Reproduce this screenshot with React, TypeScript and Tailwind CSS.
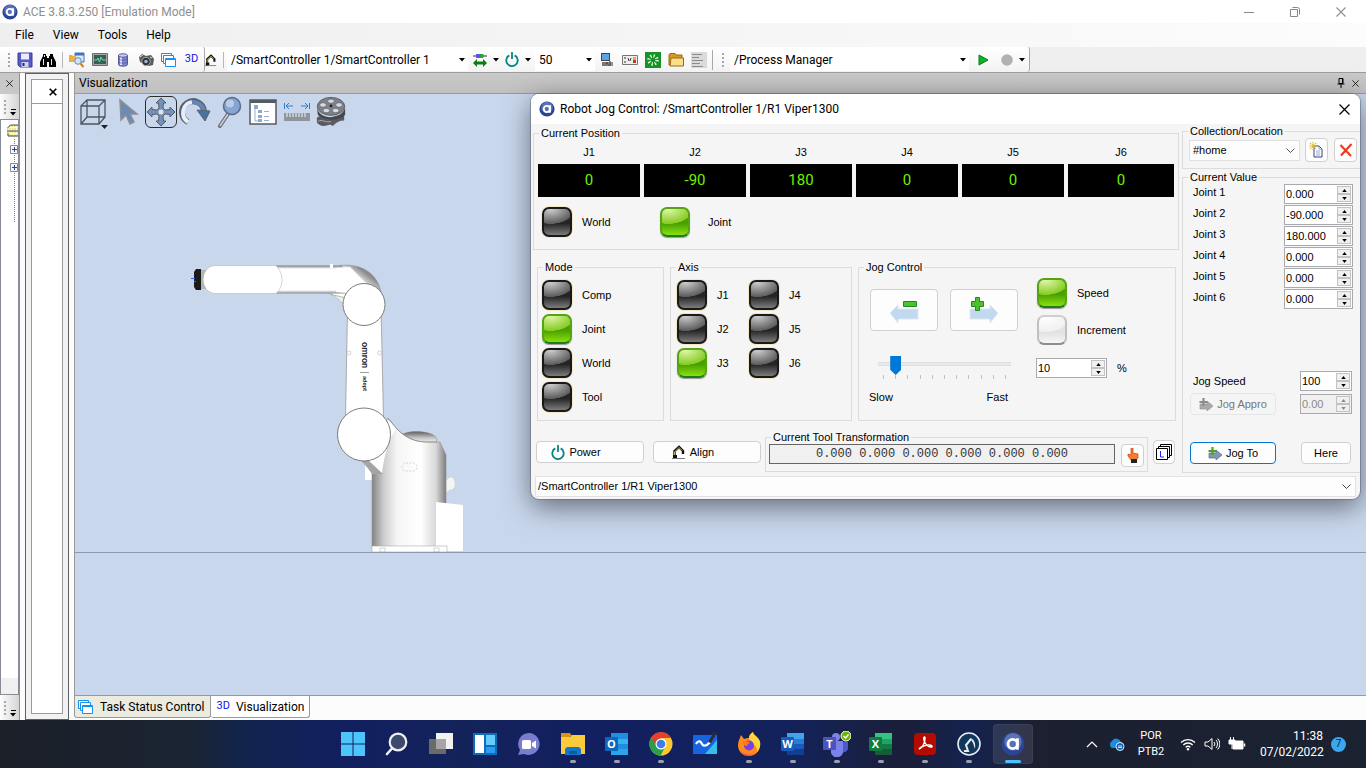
import React from 'react';
import clsx from 'clsx';

const positions = [
  { name: 'J1', value: '0' },
  { name: 'J2', value: '-90' },
  { name: 'J3', value: '180' },
  { name: 'J4', value: '0' },
  { name: 'J5', value: '0' },
  { name: 'J6', value: '0' },
];

const jointValues = ['0.000', '-90.000', '180.000', '0.000', '0.000', '0.000'];

/* ---------- icons ---------- */

function AceLogo({ className }: { className: string }) {
  return (
    <svg viewBox="0 0 16 16" className={className}>
      <circle cx="8" cy="8" r="7.600" fill="#2b4594" />
      <circle cx="8" cy="6.500" r="5.800" fill="#6f88c8" opacity="0.700" />
      <circle cx="7.800" cy="8" r="3.100" fill="none" stroke="#fff" strokeWidth="1.900" />
      <path d="M11 4.200v7.600" stroke="#fff" strokeWidth="1.800" />
    </svg>
  );
}

function Caret() {
  return (
    <svg viewBox="0 0 6 4" className="h-[4px] w-[6px] shrink-0">
      <path d="M0 0h6L3 3.400z" fill="#000" />
    </svg>
  );
}

function SaveIcon() {
  return (
    <svg viewBox="0 0 16 16" className="size-4">
      <path d="M1 1h14v14H3l-2-2z" fill="#5559cc" stroke="#3a3d96" />
      <path d="M4 1.500h8v6H4z" fill="#e9edff" />
      <path d="M4.500 10h7v5h-7z" fill="#cfd3e8" />
      <path d="M5.500 11h2v3h-2z" fill="#23267a" />
    </svg>
  );
}

function BinocularsIcon() {
  return (
    <svg viewBox="0 0 16 16" className="size-4">
      <path d="M3 2h3v2h1v2h2V4h1V2h3v2l1 2 2 4v5H9v-5H7v5H0v-5l2-4 1-2z" fill="#000" />
      <path d="M3.500 7v6M11.500 7v6M4.500 3v2" stroke="#fff" strokeWidth="0.900" />
    </svg>
  );
}

function FolderSearchIcon() {
  return (
    <svg viewBox="0 0 16 16" className="size-4">
      <path d="M6 1h9v9H6z" fill="#dce9fb" stroke="#3e73c4" />
      <path d="M6 1h9v2.500H6z" fill="#3e73c4" />
      <path d="M0 3h3l1 1h3v6H0z" fill="#e8b23c" />
      <circle cx="9" cy="9" r="3.300" fill="#cfe4fa" stroke="#6b87ab" />
      <path d="M11.500 11.500l3 3.500" stroke="#c98325" strokeWidth="2" />
    </svg>
  );
}

function MonitorIcon() {
  return (
    <svg viewBox="0 0 16 14" className="h-[14px] w-4">
      <path d="M.5.5h15v12H.5z" fill="#a8a8a8" stroke="#6b6b6b" />
      <path d="M2 2h12v9H2z" fill="#3c5a56" />
      <path d="M2 7h3l1-2 1.500 4L9 4l1.500 3H14" fill="none" stroke="#59f0b0" strokeWidth="0.900" />
    </svg>
  );
}

function DatabaseIcon() {
  return (
    <svg viewBox="0 0 12 14" className="h-[14px] w-3">
      <path d="M1.500 2.500v9c0 2.300 9 2.300 9 0v-9z" fill="#7f88cf" stroke="#3c3f86" strokeWidth="0.800" />
      <path d="M3 4v8h2V4z" fill="#e2e6ff" />
      <ellipse cx="6" cy="2.500" rx="4.500" ry="1.800" fill="#c6cbf2" stroke="#3c3f86" strokeWidth="0.800" />
      <path d="M1.500 6c1 1.500 8 1.500 9 0M1.500 9c1 1.500 8 1.500 9 0" fill="none" stroke="#3c3f86" strokeWidth="0.600" />
    </svg>
  );
}

function CameraIcon() {
  return (
    <svg viewBox="0 0 16 14" className="h-[14px] w-4">
      <path d="M1 4l3-3 4 2 5-1 3 4-1 6-4 1-9-4z" fill="#5b5b5b" />
      <circle cx="8" cy="8.500" r="4.200" fill="#333" stroke="#aaa" />
      <circle cx="8" cy="8.500" r="1.800" fill="#9db6dc" />
      <path d="M2 4l3-2M12 4l2 1" stroke="#ddd" />
    </svg>
  );
}

function WindowsIcon() {
  return (
    <svg viewBox="0 0 15 14" className="h-[14px] w-[15px]">
      <g fill="#fff" stroke="#1492ef" strokeWidth="1">
        <path d="M.5.5h10v8H.5z" />
        <path d="M2.500 2.500h10v8H2.500z" />
        <path d="M4.500 5.500h10v8H4.500z" />
      </g>
      <path d="M4.500 6.500h10" stroke="#1492ef" />
    </svg>
  );
}

function ArmIcon({ className }: { className: string }) {
  return (
    <svg viewBox="0 0 14 14" className={className}>
      <path d="M0 13.500h13" stroke="#777" />
      <path d="M2.500 13V6l4.500-4 4 4v3" fill="none" stroke="#111" strokeWidth="2.400" />
      <path d="M2.500 11V7l4.500-4.500 3 3" fill="none" stroke="#d4c46a" strokeWidth="0.900" />
      <path d="M1 10h4v3H1z" fill="#111" />
    </svg>
  );
}

function PowerIcon() {
  return (
    <svg viewBox="0 0 14 15" className="h-[15px] w-[14px]">
      <path d="M4.300 3.400a5.700 5.700 0 1 0 5.400 0M7 0v7" fill="none" stroke="#058484" strokeWidth="1.800" />
    </svg>
  );
}

function ConnectIcon() {
  return (
    <svg viewBox="0 0 14 14" className="size-[14px]">
      <path d="M0 3h14" stroke="#333" />
      <path d="M3 1h4v4H3z" fill="#5a55e8" />
      <path d="M7 1h3l1 2-1 2H7z" fill="#2aa33a" />
      <path d="M0 10l4-4v2.500h6V6l4 4-4 4v-2.500H4V14z" fill="#087d10" />
    </svg>
  );
}

function RobotArm() {
  return (
    <svg viewBox="190 256 285 296" className="ml-[115px] h-[296px] w-[285px] shrink-0">
      <defs>
        <linearGradient id="body" x1="0" x2="1" y1="0" y2="0">
          <stop offset="0.120" stopColor="#858585" />
          <stop offset="0.260" stopColor="#cdcdcd" />
          <stop offset="0.420" stopColor="#f6f6f6" />
          <stop offset="0.700" stopColor="#ffffff" />
          <stop offset="0.880" stopColor="#d8d8d8" />
          <stop offset="1" stopColor="#7d7d7d" />
        </linearGradient>
        <linearGradient id="tube" x1="0" x2="0" y1="0" y2="1">
          <stop offset="0" stopColor="#7a7a7a" />
          <stop offset="0.120" stopColor="#ffffff" />
          <stop offset="0.880" stopColor="#ffffff" />
          <stop offset="1" stopColor="#8a8a8a" />
        </linearGradient>
        <linearGradient id="elbow" x1="0" x2="1" y1="1" y2="0">
          <stop offset="0.480" stopColor="#ffffff" />
          <stop offset="0.600" stopColor="#e2e2e2" />
          <stop offset="0.750" stopColor="#8a8a8a" />
        </linearGradient>
        <linearGradient id="dome" x1="0" x2="0" y1="0" y2="1">
          <stop offset="0" stopColor="#5f5f5f" />
          <stop offset="0.500" stopColor="#c4c4c4" />
          <stop offset="1" stopColor="#ffffff" />
        </linearGradient>
      </defs>

      {/* base and column */}
      <path d="M365 465h8v15h-8z" fill="#fff" />
      <path d="M446 480l4-3h3l2 4v6l-3 3h-2l-4 3z" fill="#f4f4f4" stroke="#c4c4c4" strokeWidth="0.500" />
      <path d="M399 437c3-7 34-8 38 2l-1 5h-34z" fill="url(#dome)" stroke="#888" strokeWidth="0.500" />
      <path
        d="M388 418l9 11c9 9 18 13 30 13h13l6 13v92h-74v-74l-10-12z"
        fill="url(#body)"
        stroke="#8b8b8b"
        strokeWidth="0.500"
      />
      <path d="M363 461l9-5 13-18 3-18 8 8c-8 14-12 28-14 46h-10z" fill="#fff" />
      <path d="M363 461l5-1 15 14h-11z" fill="#a4a4a4" />
      <path d="M388 418l9 11c9 9 18 13 30 13h10" fill="none" stroke="#777" strokeWidth="0.600" />
      <path d="M436 502l27 3v46h-27z" fill="#fff" />
      <path d="M372 546h75v6h-75z" fill="#fff" stroke="#999" strokeWidth="0.500" />
      <path d="M380 548h5v4h-5zM434 548h5v4h-5z" fill="none" stroke="#aaa" strokeWidth="0.500" />
      <rect x="402" y="463" width="15" height="8" rx="4" fill="none" stroke="#aaa" strokeWidth="0.500" strokeDasharray="2 1.500" />

      {/* upper arm */}
      <path d="M347.500 310l33.500-2 2.500 110h-38z" fill="#fff" stroke="#999" strokeWidth="0.800" />
      <circle cx="349" cy="353" r="2" fill="#fff" stroke="#aaa" strokeWidth="0.500" />
      <circle cx="379.500" cy="353" r="2" fill="#fff" stroke="#aaa" strokeWidth="0.500" />
      <text transform="translate(362 342) rotate(90)" className="font-['Lato',sans-serif] text-[9px] font-bold" fill="#222">
        omron
      </text>
      <path d="M360 372.500h9" stroke="#777" strokeWidth="0.700" />
      <text transform="translate(363 376) rotate(90)" className="font-['Lato',sans-serif] text-[6px] font-bold" fill="#222">
        adept
      </text>
      <circle cx="364" cy="434.500" r="26.500" fill="#fff" stroke="#6d6d6d" strokeWidth="0.900" />

      {/* forearm */}
      <path d="M324 292c8 2 14 6 20 13l6-15z" fill="#f0f0f0" stroke="#999" strokeWidth="0.500" />
      <path d="M340 265.500c20-2 36 6 41 26l-10 12-40-9z" fill="url(#elbow)" stroke="#888" strokeWidth="0.600" />
      <path d="M276 265.500h66c6 6 8 20 4 28h-70z" fill="url(#tube)" />
      <path d="M336 268l14-1 18 18-10 9-22-2z" fill="#fff" />
      <path d="M353 268l22 17" stroke="#aaa" strokeWidth="0.600" strokeDasharray="2 1.500" />
      <rect x="330" y="264" width="3" height="4" fill="#fff" />
      <circle cx="364" cy="304.500" r="21" fill="#fff" stroke="#6d6d6d" strokeWidth="0.900" />
      <path d="M200 270h8v19h-8z" fill="#b5b5b5" />
      <path d="M216 265.500h60c8 8 8 21 0 28h-60c-17 0-17-28 0-28z" fill="#fff" stroke="#aaa" strokeWidth="0.500" />
      <path d="M196 269h5v21h-5l-2-3v-15z" fill="#1b1b1b" />
      <path d="M191 278.500h4" stroke="#3366ee" />
      <path d="M194 281.500h2" stroke="#d33" />
    </svg>
  );
}

/* ---------- shared controls ---------- */

type LedProps = { label: string; name: string; on?: boolean; light?: boolean; wide?: boolean };

function Led({ label, name, on, light, wide }: LedProps) {
  return (
    <label className={clsx('flex h-8 items-center', wide ? 'gap-[17px]' : 'gap-[9px]')}>
      <input
        type="radio"
        name={name}
        defaultChecked={on}
        className={clsx(
          'mx-px size-[30px] shrink-0 appearance-none rounded-[7px] border-2',
          on &&
            'border-[#55a512] border-b-[#1f7d16] shadow-[0_1px_1px_#9a9a9a] bg-[radial-gradient(120%_75%_at_25%_0,#e2f7ae,#86cc22_75%,transparent_77%),linear-gradient(#4fa007,#48a000_55%,#8be010)]',
          light &&
            'border-[#c0c0c0] border-t-[#cfcfcf] border-b-[#8c8c8c] bg-[radial-gradient(120%_75%_at_25%_0,#ffffff,#f0f0f0_75%,transparent_77%),linear-gradient(#e4e4e4,#e2e2e2_60%,#f6f6f6)]',
          !on &&
            !light &&
            'border-[#191919] shadow-[0_0_0_1px_#f3e8c4] bg-[radial-gradient(120%_75%_at_25%_0,#d0d0d0,#5c5c5c_75%,transparent_77%),linear-gradient(#2c2c2c,#242424_55%,#7c7c7c)]',
        )}
      />
      {label}
    </label>
  );
}

type SpinProps = { id?: string; label: string; value: string; className: string; disabled?: boolean };

function Spin({ id, label, value, className, disabled }: SpinProps) {
  return (
    <div
      className={clsx(
        'flex h-5 border border-[#a9a9ae] p-px',
        disabled ? 'bg-[#f0f0f0] text-[#8a8a8a]' : 'bg-white text-black',
        className,
      )}
    >
      <input
        id={id}
        aria-label={label}
        defaultValue={value}
        disabled={disabled}
        className="min-w-0 flex-1 bg-transparent text-[11px] leading-4 outline-none"
      />
      <div className="flex w-[14px] flex-col">
        <button aria-label={label + ' up'} disabled={disabled} className="flex flex-1 items-center justify-center border border-[#c2c2c2] bg-[#f0f0f0]">
          <svg viewBox="0 0 6 4" className="h-[3px] w-[5px]">
            <path d="M0 4h6L3 0z" fill="currentColor" />
          </svg>
        </button>
        <button aria-label={label + ' down'} disabled={disabled} className="flex flex-1 items-center justify-center border border-[#c2c2c2] bg-[#f0f0f0]">
          <svg viewBox="0 0 6 4" className="h-[3px] w-[5px]">
            <path d="M0 0h6L3 4z" fill="currentColor" />
          </svg>
        </button>
      </div>
    </div>
  );
}

function Group({ title, className, children }: { title: string; className: string; children: React.ReactNode }) {
  return (
    <fieldset className={clsx('min-w-0 border border-[#dcdcdc]', className)}>
      <legend className="ml-[5px] px-[2px] leading-[14px]">{title}</legend>
      {children}
    </fieldset>
  );
}

const pushButton = 'flex items-center justify-center rounded-[4px] border border-[#d0d0d0] bg-[#fdfdfd]';

/* ---------- main window ---------- */

function ToolButton({ label, children }: { label: string; children: React.ReactNode }) {
  return (
    <button aria-label={label} className="flex w-[23px] shrink-0 items-center justify-center">
      {children}
    </button>
  );
}

function Grip() {
  return <div className="h-[14px] w-[2px] shrink-0 bg-[repeating-linear-gradient(#a8a8a8_0_2px,transparent_2px_4px)]" />;
}

function ToolSelect({ label, value, className }: { label: string; value: string; className: string }) {
  return (
    <div className={clsx('flex h-[22px] shrink-0 items-center bg-white pr-[3px]', className)}>
      <select aria-label={label} className="h-full min-w-0 flex-1 appearance-none bg-transparent pl-1 outline-none">
        <option>{value}</option>
      </select>
      <Caret />
    </div>
  );
}

function ToolBar() {
  return (
    <div className="flex h-[25px] shrink-0 bg-[#efefef]">
      <div className="flex w-[205px] items-center rounded-r-[3px] border-r border-[#a8a8a8] bg-linear-to-b from-white to-[#f3f3f3] pl-2">
        <Grip />
        <div className="ml-[3px] flex items-center">
          <ToolButton label="Save"><SaveIcon /></ToolButton>
          <ToolButton label="Find"><BinocularsIcon /></ToolButton>
        </div>
        <div className="mr-[2px] ml-[3px] h-4 w-px shrink-0 bg-[#b8b8b8]" />
        <ToolButton label="Browse"><FolderSearchIcon /></ToolButton>
        <ToolButton label="Monitor"><MonitorIcon /></ToolButton>
        <ToolButton label="Data"><DatabaseIcon /></ToolButton>
        <ToolButton label="Camera"><CameraIcon /></ToolButton>
        <ToolButton label="Task status"><WindowsIcon /></ToolButton>
        <button className="w-[23px] text-[11px] text-[#1111ee]">3D</button>
      </div>
      <div className="flex items-center bg-linear-to-b from-white to-[#f3f3f3]">
        <button aria-label="Robot" className="w-3"><ArmIcon className="h-[14px] w-3" /></button>
        <div className="mr-[3px] ml-[6px] h-4 w-px bg-[#b8b8b8]" />
        <ToolSelect label="Controller" value="/SmartController 1/SmartController 1" className="w-[241px]" />
        <ToolButton label="Connect"><ConnectIcon /></ToolButton>
        <div className="mr-px ml-[2px]"><Caret /></div>
        <ToolButton label="Power"><PowerIcon /></ToolButton>
        <div className="mr-1 ml-[2px]"><Caret /></div>
        <ToolSelect label="Monitor speed" value="50" className="w-[60px]" />
        <ToolButton label="Computer">
          <svg viewBox="0 0 14 14" className="size-[14px]">
            <path d="M1 0h9v8H1z" fill="#444" />
            <path d="M2 1h7v6H2z" fill="#5aa3e6" />
            <path d="M2 9h6l1 4H2z" fill="#777" />
            <path d="M6 10h7M8 12h5M10 8v5" stroke="#333" />
          </svg>
        </ToolButton>
        <ToolButton label="Digital I/O">
          <svg viewBox="0 0 16 10" className="h-[10px] w-4">
            <path d="M.5.5h15v9H.5z" fill="#eee" stroke="#777" />
            <path d="M3 2v2M3 6v2M6 3l1 3M9 3l-1 3" stroke="#333" />
            <path d="M11 2h3v3h-3z" fill="#e3b21e" />
            <path d="M11 5h3v3h-3z" fill="#dd2b2b" />
          </svg>
        </ToolButton>
        <ToolButton label="Vision">
          <svg viewBox="0 0 16 16" className="size-4">
            <path d="M0 0h16v16H0z" fill="#159326" />
            <circle cx="8" cy="8" r="4" fill="none" stroke="#e9fbe9" strokeWidth="3.500" strokeDasharray="1.200 1.950" />
          </svg>
        </ToolButton>
        <ToolButton label="Open">
          <svg viewBox="0 0 16 14" className="h-[14px] w-4">
            <path d="M1 2l1-1.500h5L8 2h6v10H1z" fill="#d9991c" stroke="#9a6a0c" />
            <path d="M3 5h12.500v8H2z" fill="#fbe08a" stroke="#9a6a0c" />
          </svg>
        </ToolButton>
        <ToolButton label="Log">
          <svg viewBox="0 0 16 16" className="size-4">
            <path d="M0 0h16v16H0z" fill="#dadada" />
            <path d="M1 2.500h10M1 5.500h7M1 8.500h11M1 11.500h8M1 14.500h11" stroke="#8c8c8c" />
          </svg>
        </ToolButton>
        <div className="ml-[2px] h-5 w-px bg-[#a8a8a8]" />
      </div>
      <div className="flex items-center rounded-r-[3px] border-r border-[#a8a8a8] bg-linear-to-b from-white to-[#f3f3f3] pl-[9px]">
        <Grip />
        <div className="w-[6px]" />
        <ToolSelect label="Process" value="/Process Manager" className="w-[239px]" />
        <div className="w-[3px]" />
        <ToolButton label="Start">
          <svg viewBox="0 0 11 12" className="h-3 w-[11px]">
            <path d="M1 1l9 5-9 5z" fill="#0bb52a" stroke="#087a1c" />
          </svg>
        </ToolButton>
        <ToolButton label="Stop">
          <svg viewBox="0 0 12 12" className="size-3">
            <circle cx="6" cy="6" r="5.800" fill="#b1b1b1" />
          </svg>
        </ToolButton>
        <div className="mr-1 ml-px"><Caret /></div>
      </div>
    </div>
  );
}

function CloseX({ className }: { className: string }) {
  return (
    <svg viewBox="0 0 10 10" className={className}>
      <path d="M.5.5l9 9M9.500.5l-9 9" stroke="currentColor" strokeWidth="1.100" />
    </svg>
  );
}

function StripOverflow() {
  return (
    <div className="flex h-[25px] shrink-0 items-center justify-between bg-linear-to-r from-[#fdfdfd] to-[#d5d5d5] pr-[3px] pl-1">
      <Grip />
      <div className="flex flex-col items-center gap-[2px] pt-3">
        <div className="h-px w-[5px] bg-black" />
        <Caret />
      </div>
    </div>
  );
}

function SideStrips() {
  return (
    <>
      <aside className="flex w-5 shrink-0 flex-col border-r border-[#8f8f8f] bg-[#f4f4f4]">
        <button aria-label="Close workspace" className="flex h-[21px] items-center justify-center bg-[#c8c8c8]">
          <CloseX className="size-[7px]" />
        </button>
        <StripOverflow />
        <div className="flex flex-1 flex-col items-end border border-[#888c94] bg-white pt-1">
          <svg viewBox="0 0 12 100" className="h-[100px] w-3">
            <path d="M2 6l2-5h8v12H3z" fill="#fffbe0" />
            <path d="M3 2h9M1 5h11M1 8h11M3 11h9" stroke="#c9c420" strokeDasharray="1.500 1" />
            <path d="M1.500 4l3-3h8M1 7h11M2 9v3h10" fill="none" stroke="#444" />
            <path d="M8.500 15v84" stroke="#777" strokeDasharray="1 1" />
            <path d="M4.500 21.500h7v8h-7zM4.500 39.500h7v8h-7z" fill="#f4f6fb" stroke="#8a8a8a" />
            <path d="M6 25.500h5M8.500 23v5M6 43.500h5M8.500 41v5" stroke="#2a4796" />
          </svg>
          <div className="mt-auto h-4 w-full bg-[#f0f0f0]" />
        </div>
        <StripOverflow />
      </aside>
      <aside className="ml-[5px] flex w-11 shrink-0 flex-col border border-[#5f5f5f] bg-[#f2f2f2] p-[5px]">
        <div className="flex flex-1 flex-col border border-[#9b9b9b] bg-white">
          <button aria-label="Close panel" className="flex h-6 items-center justify-end border-b border-[#9b9b9b] pr-[5px]">
            <svg viewBox="0 0 8 8" className="size-2">
              <path d="M.7.7l6.600 6.600M7.300.7L.7 7.300" stroke="#000" strokeWidth="1.600" />
            </svg>
          </button>
        </div>
      </aside>
    </>
  );
}

function ViewTools() {
  return (
    <div className="flex h-9 shrink-0 items-center gap-[2px] pl-[2px]">
      <button aria-label="View cube" className="w-8">
        <svg viewBox="0 0 32 34" className="h-[34px] w-8">
          <path d="M4 11h18v18H4zM10 5h18v17H10zM4 11l6-6M22 11l6-6M22 29l6-7M4 29l6-7" fill="none" stroke="#4d5560" strokeWidth="1.300" />
          <path d="M24 30h7l-3.500 4z" fill="#222" />
        </svg>
      </button>
      <button aria-label="Select" className="w-8">
        <svg viewBox="0 0 32 32" className="size-8">
          <path d="M9 4l1 20 5-5 4 9 4-2-4-8h7z" fill="#6d8ab4" stroke="#8b8f96" strokeWidth="1.500" />
        </svg>
      </button>
      <button aria-label="Pan" className="w-8 rounded-[6px] border border-[#2d2d2d]">
        <svg viewBox="0 0 30 30" className="size-[30px]">
          <path
            d="M15 1l5 5h-2.500l-.5 5 2 2 5-.5V10l5 5-5 5v-2.500l-5-.5-2 2 .5 5H20l-5 5-5-5h2.500l.5-5-2-2-5 .5V20l-5-5 5-5v2.500l5 .5 2-2-.5-5H10z"
            fill="#7390b8"
            stroke="#565d68"
          />
          <circle cx="15" cy="15" r="3" fill="#dbe5f2" stroke="#8793a5" />
        </svg>
      </button>
      <button aria-label="Rotate" className="w-8">
        <svg viewBox="0 0 32 32" className="size-8">
          <path d="M9 26A11 11 0 1 1 25 15" fill="none" stroke="#596270" strokeWidth="6" />
          <path d="M9 26A11 11 0 0 1 13 6" fill="none" stroke="#e8eef7" strokeWidth="4" />
          <path d="M13 6A11 11 0 0 1 25 15" fill="none" stroke="#6486b4" strokeWidth="4" />
          <path d="M18 14l13 1-5 10z" fill="#4b719f" stroke="#596270" />
        </svg>
      </button>
      <button aria-label="Zoom" className="w-8">
        <svg viewBox="0 0 32 32" className="size-8">
          <path d="M15 18L7 30" stroke="#6f747b" strokeWidth="4" strokeLinecap="round" />
          <path d="M15 18L7 30" stroke="#c9ccd1" strokeWidth="1.500" />
          <circle cx="19" cy="10" r="8.500" fill="#85a5d3" stroke="#5c6b83" strokeWidth="1.500" />
          <circle cx="17" cy="7.500" r="4" fill="#c6d7ee" opacity="0.800" />
        </svg>
      </button>
      <button aria-label="Scene tree" className="w-8">
        <svg viewBox="0 0 28 26" className="mx-auto h-[26px] w-7">
          <path d="M1 1h26v24H1z" fill="#fff" stroke="#555b63" strokeWidth="1.500" />
          <path d="M1 1h26v3H1z" fill="#555b63" />
          <path d="M5 6h4v4H5zM9 11h4v3H9zM9 16h4v3H9zM9 20h4v3H9z" fill="#8ba8cf" />
          <path d="M6 10v12h3M15 12.500h5M15 17.500h5M15 21.500h5" fill="none" stroke="#9bb0cc" />
        </svg>
      </button>
      <button aria-label="Measure" className="w-8">
        <svg viewBox="0 0 28 20" className="mx-auto h-5 w-7">
          <path d="M1.500 1v6M26.500 1v6M3 4h7M18 4h7M6 1L3 4l3 3M22 1l3 3-3 3" fill="none" stroke="#2f7ad0" />
          <path d="M1 11h26v8H1z" fill="#8f959d" />
          <path d="M4 11v4M7 11v4M10 11v4M13 11v4M16 11v4M19 11v4M22 11v4" stroke="#f2f2f2" />
        </svg>
      </button>
      <button aria-label="Record" className="w-8">
        <svg viewBox="0 0 34 34" className="h-[34px] w-8">
          <path d="M2 23c6-4 9 2 14 0s11-2 15-6v9c-5 0-9 2-12 6-4-3-6 0-10 0-3 0-6-2-7-4z" fill="#595b60" />
          <path d="M2 12c2 14 27 14 30 0v8c-6 7-23 7-29 0z" fill="#45474c" />
          <path d="M3 27c5-3 8 2 14 0" fill="none" stroke="#a9abb0" />
          <ellipse cx="17" cy="11" rx="14.500" ry="9.500" fill="#7e8188" stroke="#55585e" />
          <g fill="#d5dbe5" stroke="#55585e" strokeWidth="0.700">
            <ellipse cx="17" cy="5.500" rx="3.500" ry="2.200" />
            <ellipse cx="8.500" cy="9.500" rx="3.500" ry="2.400" />
            <ellipse cx="25.500" cy="9.500" rx="3.500" ry="2.400" />
            <ellipse cx="12" cy="15.500" rx="3.500" ry="2.400" />
            <ellipse cx="22" cy="15.500" rx="3.500" ry="2.400" />
          </g>
          <circle cx="17" cy="10.500" r="1.500" fill="#222" />
        </svg>
      </button>
    </div>
  );
}

function Viewport() {
  return (
    <main className="ml-[5px] flex min-w-0 flex-1 flex-col bg-[#fcfcfc]">
      <header className="flex h-[21px] shrink-0 items-center border-b border-l border-[#999] bg-linear-to-b from-[#c9c9c9] to-[#c0c0c0] pl-1">
        <h2>Visualization</h2>
        <button aria-label="Pin" className="ml-auto">
          <svg viewBox="0 0 8 10" className="h-[10px] w-2">
            <path d="M2 .5h4v5H2zM.5 6h7M4 6v4M5.500 1v5" fill="none" stroke="#000" />
          </svg>
        </button>
        <button aria-label="Close visualization" className="mr-[7px] ml-[7px]">
          <CloseX className="size-[7px]" />
        </button>
      </header>
      <div className="flex flex-1 flex-col border-b border-l border-[#9a9a9a] bg-[#c9d7ed]">
        <div className="flex h-[459px] shrink-0 flex-col justify-between border-b border-[#8b9bb0]">
          <ViewTools />
          <RobotArm />
        </div>
      </div>
      <nav className="flex h-6 shrink-0 items-start">
        <button className="flex h-[22px] items-center gap-[7px] rounded-b-[3px] border border-t-0 border-[#9a9a9a] bg-[#ebebdf] pr-[6px] pl-[3px]">
          <WindowsIcon />
          Task Status Control
        </button>
        <button className="flex h-[22px] items-center gap-[6px] rounded-b-[3px] border border-t-0 border-l-0 border-[#9a9a9a] bg-white px-[5px]">
          <span className="text-[11px] text-[#1111ee]">3D</span>
          Visualization
        </button>
      </nav>
    </main>
  );
}

/* ---------- jog dialog ---------- */

function JogArrow({ minus }: { minus?: boolean }) {
  return (
    <svg viewBox="0 0 30 26" className="h-[26px] w-[30px]">
      <path
        d={minus ? 'M1 16l8-8v4h20v10H9v4z' : 'M29 16l-8-8v4H1v10h20v4z'}
        fill="#c2d8ee"
        stroke="#dce8f5"
      />
      {minus ? (
        <path d="M14.500 4.500h13v5h-13z" fill="#4bc22d" stroke="#248a22" />
      ) : (
        <path d="M6.500.5h4v4h4v5h-4v4h-4v-4h-4v-5h4z" fill="#4bc22d" stroke="#248a22" />
      )}
    </svg>
  );
}

function JogToIcon({ grey }: { grey?: boolean }) {
  return (
    <svg viewBox="0 0 14 13" className="h-[13px] w-[14px]">
      <path d="M1 6h7V3l6 5-6 5v-2H1z" fill={grey ? '#a9a9a9' : '#8296b8'} stroke={grey ? '#999' : '#5c6b86'} strokeWidth="0.700" />
      <path d="M4.500 0v8M.5 4h8" stroke={grey ? '#8c8c8c' : '#4da321'} strokeWidth="2.200" />
    </svg>
  );
}

function JogControl() {
  return (
    <Group title="Jog Control" className="h-[161px] flex-1">
      <div className="flex gap-4 pl-[11px]">
        <div className="w-[150px] pt-[15px]">
          <div className="flex gap-3">
            <button aria-label="Jog minus" className={clsx(pushButton, 'h-[42px] w-[68px]')}><JogArrow minus /></button>
            <button aria-label="Jog plus" className={clsx(pushButton, 'h-[42px] w-[68px]')}><JogArrow /></button>
          </div>
          <input
            type="range"
            aria-label="Jog speed"
            min="0"
            max="10"
            defaultValue="1"
            className="mt-[25px] ml-2 block h-[19px] w-[133px] appearance-none bg-[linear-gradient(#d6d6d6,#e7eaea_1px,#e7eaea_3px,#d6d6d6)] bg-[length:100%_4px] bg-[position:0_6px] bg-no-repeat [&::-webkit-slider-thumb]:h-[19px] [&::-webkit-slider-thumb]:w-[11px] [&::-webkit-slider-thumb]:appearance-none [&::-webkit-slider-thumb]:bg-[#0078d7] [&::-webkit-slider-thumb]:[clip-path:polygon(0_0,100%_0,100%_72%,50%_100%,0_72%)]"
          />
          <div className="ml-[13px] flex h-[4px] w-[123px] justify-between">
            {Array.from({ length: 11 }, (_, i) => (
              <div key={i} className="w-px bg-[#c2c2c2]" />
            ))}
          </div>
          <div className="mt-[11px] -ml-px flex justify-between pr-3 leading-[14px]">
            <span>Slow</span>
            <span>Fast</span>
          </div>
        </div>
        <div className="flex flex-col gap-[5px] pt-[3px]">
          <Led label="Speed" name="jogmode" on />
          <Led label="Increment" name="jogmode" light />
          <div className="flex items-center gap-[10px] pt-[7px]">
            <Spin label="Speed percent" value="10" className="w-[71px]" />
            <span>%</span>
          </div>
        </div>
      </div>
    </Group>
  );
}

function LocationPanel() {
  return (
    <div className="flex w-[178px] shrink-0 flex-col">
      <Group title="Collection/Location" className="h-[45px] border-r-0">
        <div className="flex items-start gap-[5px] pl-[6px]">
          <div className="mt-[2px] flex h-[21px] w-[111px] items-center border border-[#e0e0e0] bg-[#fdfdfd] pr-1">
            <select aria-label="Collection" className="min-w-0 flex-1 appearance-none bg-transparent pl-[3px] outline-none">
              <option>#home</option>
            </select>
            <svg viewBox="0 0 9 5" className="h-[5px] w-[9px]">
              <path d="M.5.5l4 4 4-4" fill="none" stroke="#555" />
            </svg>
          </div>
          <button aria-label="New location" className={clsx(pushButton, 'mr-px h-6 w-[23px]')}>
            <svg viewBox="0 0 15 16" className="h-4 w-[15px]">
              <path d="M5 4h5l3 3v8H5z" fill="#fff" stroke="#31497c" />
              <path d="M10 4v3h3M7 9h4M7 11h4M7 13h4" fill="none" stroke="#7d93c0" strokeWidth="0.800" />
              <path d="M4 0v8M0 4h8M1 1l6 6M7 1L1 7" stroke="#e5b91d" strokeWidth="1.200" strokeDasharray="1.500 0.800" />
            </svg>
          </button>
          <button aria-label="Delete location" className={clsx(pushButton, 'h-6 w-[23px]')}>
            <svg viewBox="0 0 14 14" className="size-[14px]">
              <path d="M1.500 2L12 13M12.500 1L2 12.500" stroke="#e93c20" strokeWidth="2.200" />
            </svg>
          </button>
        </div>
      </Group>
      <Group title="Current Value" className="mt-px h-[303px] border-r-0">
        <div className="flex flex-col gap-px pr-[7px] pl-[10px]">
          {jointValues.map((value, i) => (
            <div key={i} className="flex items-start justify-between">
              <label htmlFor={'joint-' + (i + 1)} className="leading-4">Joint {i + 1}</label>
              <Spin id={'joint-' + (i + 1)} label={'Joint ' + (i + 1)} value={value} className="w-[69px]" />
            </div>
          ))}
        </div>
        <div className="mt-[62px] flex items-center justify-between pr-2 pl-[10px]">
          <label htmlFor="jog-speed">Jog Speed</label>
          <Spin id="jog-speed" label="Jog speed" value="100" className="w-[52px]" />
        </div>
        <div className="mt-[2px] flex items-center justify-between pr-2 pl-[7px]">
          <button disabled className="flex h-[22px] w-[86px] items-center justify-center gap-1 rounded-[4px] border border-[#e6e6e6] text-[#777]">
            <JogToIcon grey />
            Jog Appro
          </button>
          <Spin label="Approach height" value="0.00" className="w-[52px]" disabled />
        </div>
        <div className="mt-[27px] flex justify-between pr-[9px] pl-[7px]">
          <button className="flex h-[22px] w-[86px] items-center justify-center gap-1 rounded-[4px] border border-[#0078d4] bg-[#fdfdfd]">
            <JogToIcon />
            Jog To
          </button>
          <button className={clsx(pushButton, 'h-[22px] w-[50px]')}>Here</button>
        </div>
      </Group>
    </div>
  );
}

function JogDialog() {
  return (
    <section
      role="dialog"
      aria-label="Robot Jog Control"
      className="absolute top-[94px] right-[6px] w-[829px] overflow-hidden rounded-[8px] bg-[#f5f5f5] shadow-[0_0_0_1px_rgba(90,100,115,0.500),0_8px_28px_rgba(0,0,0,0.500)]"
    >
      <header className="flex h-[30px] items-center bg-white pr-[10px] pl-2">
        <AceLogo className="size-4" />
        <h1 className="ml-[5px]">Robot Jog Control: /SmartController 1/R1 Viper1300</h1>
        <button aria-label="Close" className="ml-auto"><CloseX className="size-[11px]" /></button>
      </header>
      <div className="font-['Liberation_Sans',Arial,sans-serif] text-[11px]">
        <div className="flex justify-between pl-[2px]">
          <div className="w-[646px] pt-[2px]">
            <Group title="Current Position" className="h-[124px]">
              <div className="grid grid-cols-[repeat(5,102px)_1fr] gap-1 px-1 pt-[5px] text-center">
                {positions.map((p) => (
                  <div key={p.name}>
                    <div className="pb-1 leading-[15px]">{p.name}</div>
                    <div className="bg-black font-['Roboto',sans-serif] text-[15px] leading-[33px] text-[#6cf400]">{p.value}</div>
                  </div>
                ))}
              </div>
              <div className="flex pt-[9px] pl-[7px]">
                <div className="w-[118px]"><Led label="World" name="frame" /></div>
                <Led label="Joint" name="frame" on wide />
              </div>
            </Group>
            <div className="mt-[10px] flex gap-[6px] pr-[3px] pl-1">
              <Group title="Mode" className="h-[161px] w-[127px]">
                <div className="flex flex-col gap-[2px] pt-[5px] pl-[3px]">
                  <Led label="Comp" name="mode" />
                  <Led label="Joint" name="mode" on />
                  <Led label="World" name="mode" />
                  <Led label="Tool" name="mode" />
                </div>
              </Group>
              <Group title="Axis" className="h-[161px] w-[182px]">
                <div className="grid w-[149px] grid-flow-col grid-cols-2 grid-rows-3 gap-y-[2px] pt-[5px] pl-[5px]">
                  <Led label="J1" name="axis" />
                  <Led label="J2" name="axis" />
                  <Led label="J3" name="axis" on />
                  <Led label="J4" name="axis" />
                  <Led label="J5" name="axis" />
                  <Led label="J6" name="axis" />
                </div>
              </Group>
              <JogControl />
            </div>
            <div className="mt-[9px] flex items-start pl-[3px]">
              <button className={clsx(pushButton, 'mt-[11px] h-[22px] w-[108px] gap-1 pr-7')}>
                <PowerIcon />
                Power
              </button>
              <button className={clsx(pushButton, 'mt-[11px] ml-[9px] h-[22px] w-[108px] gap-1 pr-7')}>
                <ArmIcon className="size-[14px]" />
                Align
              </button>
              <Group title="Current Tool Transformation" className="ml-1 h-[42px] w-[383px]">
                <div className="flex gap-[6px] pl-[3px]">
                  <input
                    aria-label="Current tool transformation"
                    readOnly
                    value="0.000 0.000 0.000 0.000 0.000 0.000"
                    className="h-5 w-[346px] border border-[#666] bg-[#f0f0f0] text-center font-['Liberation_Mono',monospace] text-[12px] text-[#333] outline-none"
                  />
                  <button aria-label="Edit tool" className={clsx(pushButton, 'size-[23px]')}>
                    <svg viewBox="0 0 12 15" className="h-[15px] w-3">
                      <path d="M4 0h2v5l5 1v4l-2 2H4L1 8V6l3 1z" fill="#fb7a2c" stroke="#c8430c" strokeWidth="0.700" />
                      <path d="M4 11h6v4H4z" fill="#222" />
                    </svg>
                  </button>
                </div>
              </Group>
              <button aria-label="Layers" className={clsx(pushButton, 'mt-[10px] ml-[5px] h-6 w-[22px] shrink-0')}>
                <svg viewBox="0 0 16 16" className="size-4 shrink-0">
                  <g fill="#fff" stroke="#000">
                    <path d="M4.500.5h11v11h-11z" />
                    <path d="M2.500 2.500h11v11h-11z" />
                    <path d="M.5 4.500h11v11H.5z" />
                  </g>
                  <path d="M4.500 7v6H8" fill="none" stroke="#22f" />
                </svg>
              </button>
            </div>
          </div>
          <LocationPanel />
        </div>
        <div className="mx-1 mt-[3px] mb-[2px] flex h-[21px] items-center border border-[#e2e2e2] bg-[#fdfdfd] pr-1">
          <select aria-label="Robot" className="min-w-0 flex-1 appearance-none bg-transparent pl-[2px] outline-none">
            <option>/SmartController 1/R1 Viper1300</option>
          </select>
          <svg viewBox="0 0 9 5" className="h-[5px] w-[9px]">
            <path d="M.5.5l4 4 4-4" fill="none" stroke="#444" />
          </svg>
        </div>
      </div>
    </section>
  );
}

/* ---------- taskbar ---------- */

function OfficeIcon({ letter, dark, tones }: { letter: string; dark: string; tones: string[] }) {
  return (
    <svg viewBox="0 0 24 24" className="size-6">
      <path d="M6 1h17v6H6z" fill={tones[0]} />
      <path d="M6 7h17v5H6z" fill={tones[1]} />
      <path d="M6 12h17v5H6z" fill={tones[2]} />
      <path d="M6 17h17v6H6z" fill={tones[3]} />
      <rect x="0" y="5" width="13" height="14" rx="1" fill={dark} />
      <text x="6.500" y="16" textAnchor="middle" fill="#fff" className="font-['Open_Sans',sans-serif] text-[11px] font-bold">
        {letter}
      </text>
    </svg>
  );
}

const apps: { name: string; open?: boolean; active?: boolean; icon: React.ReactNode }[] = [
  {
    name: 'Start',
    icon: (
      <svg viewBox="0 0 24 24" className="size-6">
        <path d="M0 0h11.500v11.500H0zM12.500 0H24v11.500H12.500zM0 12.500h11.500V24H0zM12.500 12.500H24V24H12.500z" fill="#4cc5fa" />
      </svg>
    ),
  },
  {
    name: 'Search',
    icon: (
      <svg viewBox="0 0 24 24" className="size-6">
        <circle cx="13" cy="10" r="8.300" fill="#3b4a6d" stroke="#f0f0f3" strokeWidth="2.200" />
        <path d="M7 16.500L2 22" stroke="#f0f0f3" strokeWidth="2.600" strokeLinecap="round" />
      </svg>
    ),
  },
  {
    name: 'Task view',
    icon: (
      <svg viewBox="0 0 24 24" className="size-6">
        <path d="M7 1h17v16H7z" fill="#f1f1f1" />
        <path d="M0 7h17v15H0z" fill="#6a6a6a" />
        <path d="M7 7h10v10H7z" fill="#a5a5a5" />
      </svg>
    ),
  },
  {
    name: 'Widgets',
    icon: (
      <svg viewBox="0 0 24 24" className="size-6">
        <path d="M0 1h24v22H0z" fill="#0f6cbd" />
        <path d="M2 3h9v18H2z" fill="#fff" />
        <path d="M13 3h9v10h-9z" fill="#62cdfb" />
        <path d="M13 15h9v6h-9z" fill="#2a9df0" />
      </svg>
    ),
  },
  {
    name: 'Chat',
    icon: (
      <svg viewBox="0 0 24 24" className="size-6">
        <path d="M12 1a11 11 0 1 1-5 21l-6 1 2-5A11 11 0 0 1 12 1z" fill="#7a7cd0" />
        <rect x="5" y="8" width="9" height="9" rx="1.500" fill="#fff" />
        <path d="M15 11l4-2.500v8L15 14z" fill="#fff" />
      </svg>
    ),
  },
  {
    name: 'File Explorer',
    open: true,
    icon: (
      <svg viewBox="0 0 24 24" className="size-6">
        <path d="M0 1h9l2 3h-2v4H0z" fill="#d99211" />
        <path d="M0 5h9l2-2h13v19H0z" fill="#fccb3c" />
        <path d="M4 23v-6l2-2h12l2 2v6z" fill="#1477c8" />
        <path d="M8 19h8v3H8z" fill="#0d5ba0" />
      </svg>
    ),
  },
  {
    name: 'Outlook',
    open: true,
    icon: <OfficeIcon letter="O" dark="#0f66bb" tones={['#1f8fe0', '#39b3f0', '#1e8fe0', '#2aa5ea']} />,
  },
  {
    name: 'Chrome',
    open: true,
    icon: (
      <svg viewBox="0 0 24 24" className="size-6">
        <circle cx="12" cy="12" r="11.500" fill="#fcc934" />
        <path d="M12 12L2 6a11.500 11.500 0 0 0 9.500 17.500l5-9z" fill="#2a9d4b" />
        <path d="M12 6h10.200a11.500 11.500 0 0 0-20.200 0l5 7z" fill="#e3402f" />
        <circle cx="12" cy="12" r="5.500" fill="#fff" />
        <circle cx="12" cy="12" r="4.300" fill="#3b7ded" />
      </svg>
    ),
  },
  {
    name: 'Whiteboard',
    icon: (
      <svg viewBox="0 0 24 24" className="size-6">
        <path d="M0 3h24v19H0z" fill="#1664e0" />
        <path d="M12 22L24 8v14z" fill="#36bdea" />
        <path d="M3 12c3-5 5-2 6 0s4 3 8-2" fill="none" stroke="#fff" strokeWidth="2.200" />
        <path d="M15 10l6-10 3 1-6 10z" fill="#2d2d31" />
      </svg>
    ),
  },
  {
    name: 'Firefox',
    open: true,
    icon: (
      <svg viewBox="0 0 24 24" className="size-6">
        <path d="M12 24C5 24 1 19 1 13c0-4 2-7 3-10l3 4c2-1 4-1 5-1 0-2 1-4 4-6 0 3 6 5 7 10 1 8-4 14-11 14z" fill="#ff8a1c" />
        <path d="M16 0c0 3 6 5 7 10 1 4-1 8-3 10 1-8-8-8-8-14 0-2 1-4 4-6z" fill="#ffd63a" />
        <path d="M3 17c2 5 10 8 16 4-3 3-12 5-16-4z" fill="#f0286a" />
        <circle cx="12" cy="13.500" r="5" fill="#7a3fe0" />
        <path d="M6 10c3-2 4 0 7 0-1 2-3 2-3 4-3 0-4-2-4-4z" fill="#ff7a1c" />
      </svg>
    ),
  },
  {
    name: 'Word',
    open: true,
    icon: <OfficeIcon letter="W" dark="#185abd" tones={['#41a5ee', '#2b7cd3', '#185abd', '#103f91']} />,
  },
  {
    name: 'Teams',
    open: true,
    icon: (
      <svg viewBox="0 0 28 26" className="h-[26px] w-7">
        <circle cx="13" cy="6" r="4" fill="#7b83eb" />
        <path d="M8 10h12v8a6 6 0 0 1-12 4z" fill="#7b83eb" />
        <path d="M20 11h5v6a4 4 0 0 1-5 4z" fill="#5059c9" />
        <rect x="0" y="6" width="13" height="13" rx="1" fill="#4b53bc" />
        <text x="6.500" y="16.500" textAnchor="middle" fill="#fff" className="font-['Open_Sans',sans-serif] text-[11px] font-bold">
          T
        </text>
        <circle cx="23" cy="5" r="5" fill="#6bb700" stroke="#fff" />
        <path d="M20.500 5l2 2 3-3.500" fill="none" stroke="#fff" strokeWidth="1.300" />
      </svg>
    ),
  },
  {
    name: 'Excel',
    open: true,
    icon: <OfficeIcon letter="X" dark="#107c41" tones={['#33c481', '#21a366', '#107c41', '#185c37']} />,
  },
  {
    name: 'Acrobat',
    open: true,
    icon: (
      <svg viewBox="0 0 24 24" className="size-6">
        <rect x="1" y="1" width="22" height="22" rx="4" fill="#b30b00" />
        <path d="M6 17c3-1 6-5 6-11 0-2-2-1-1 2 1 4 4 7 7 7 2 0 1-2-2-2-4 0-8 2-10 4z" fill="none" stroke="#fff" strokeWidth="1.500" />
      </svg>
    ),
  },
  {
    name: 'Robot Studio',
    open: true,
    icon: (
      <svg viewBox="0 0 24 24" className="size-6">
        <circle cx="12" cy="12" r="11" fill="#11365a" stroke="#e8edf2" strokeWidth="1.600" />
        <path d="M7 19h4l-2-6 5-6" fill="none" stroke="#e8edf2" strokeWidth="2" />
        <path d="M13 6c4 1 6 5 5 11l-2-6z" fill="#e8edf2" />
      </svg>
    ),
  },
  { name: 'ACE', open: true, active: true, icon: <AceLogo className="size-6" /> },
];

function Taskbar() {
  return (
    <footer className="grid h-12 shrink-0 grid-cols-[1fr_auto_1fr] items-center bg-[linear-gradient(90deg,#1c2029_0%,#1a2432_14%,#11234d_18%,#121f60_25%,#13235a_34%,#121f60_43%,#13225a_58%,#1a1f38_66%,#14224f_71%,#1c2030_76%,#1a2230_100%)] text-white">
      <div />
      <div className="flex">
        {apps.map((app) => (
          <button key={app.name} aria-label={app.name} className="flex h-12 w-11 items-center justify-center">
            <div
              className={clsx(
                'flex h-10 w-10 flex-col items-center justify-between rounded-[4px] border pt-[7px]',
                app.active ? 'border-white/5 bg-white/10' : 'border-transparent',
              )}
            >
              <div className="flex h-6 items-center">{app.icon}</div>
              {app.open && <div className={clsx('h-[3px] rounded-full', app.active ? 'w-4 bg-[#4cc2ff]' : 'w-[6px] bg-[#9aa0ae]')} />}
            </div>
          </button>
        ))}
      </div>
      <div className="flex items-center justify-end pr-5">
        <svg viewBox="0 0 12 7" className="h-[7px] w-3">
          <path d="M1 6l5-5 5 5" fill="none" stroke="#fff" strokeWidth="1.200" />
        </svg>
        <svg viewBox="0 0 17 14" className="ml-[10px] h-[14px] w-[17px]">
          <path d="M4 11a4 4 0 0 1 0-7 5 5 0 0 1 9 1 3.500 3.500 0 0 1 0 6z" fill="#1c8be0" />
          <circle cx="12" cy="9.500" r="4" fill="#0b62b0" stroke="#d8ecff" />
          <path d="M10 9h4M10 10.500h4" stroke="#fff" strokeWidth="0.800" />
        </svg>
        <div className="ml-[10px] w-[32px] text-center text-[11px] leading-4">
          <div>POR</div>
          <div>PTB2</div>
        </div>
        <svg viewBox="0 0 16 14" className="ml-[13px] h-[14px] w-4">
          <path d="M1 5.500a10 10 0 0 1 14 0M3.300 8a6.500 6.500 0 0 1 9.400 0M5.600 10.400a3.400 3.400 0 0 1 4.800 0" fill="none" stroke="#fff" strokeWidth="1.300" />
          <circle cx="8" cy="12.300" r="1.200" fill="#fff" />
        </svg>
        <svg viewBox="0 0 16 14" className="ml-2 h-[14px] w-4">
          <path d="M1 5h3l4-3.500v11L4 9H1z" fill="none" stroke="#fff" />
          <path d="M10 5a3 3 0 0 1 0 4M12 3a6 6 0 0 1 0 8M13.700 1.500a8 8 0 0 1 0 11" fill="none" stroke="#fff" />
        </svg>
        <svg viewBox="0 0 18 14" className="ml-2 h-[14px] w-[18px]">
          <path d="M5 4h10v8H5z" fill="#fff" stroke="#fff" />
          <path d="M16.500 6.500v3" stroke="#fff" strokeWidth="1.500" />
          <path d="M1 3h6v4H1zM2.500 0v3M5.500 0v3M4 7v5" fill="#fff" stroke="#fff" />
        </svg>
        <div className="ml-[14px] w-[63px] text-right text-[12px] leading-4">
          <div>11:38</div>
          <div>07/02/2022</div>
        </div>
        <div className="ml-2 flex size-[15px] items-center justify-center rounded-full bg-[#3aa7ee] text-[10px] leading-none text-[#10202f]">7</div>
      </div>
    </footer>
  );
}

export default function App() {
  return (
    <div className="relative flex h-screen min-h-[700px] flex-col bg-[#fcfcfc] font-['Roboto','Noto_Sans',sans-serif] text-[12px] text-black">
      <header className="flex h-[23px] shrink-0 items-center bg-white pl-[2px] text-[#8f8f8f]">
        <AceLogo className="size-4" />
        <span className="ml-[5px]">ACE 3.8.3.250 [Emulation Mode]</span>
        <div className="ml-auto flex items-center gap-9 pr-5">
          <button aria-label="Minimize">
            <svg viewBox="0 0 10 10" className="size-[10px]"><path d="M0 5.500h10" stroke="#888" /></svg>
          </button>
          <button aria-label="Restore">
            <svg viewBox="0 0 10 10" className="size-[10px]">
              <path d="M.5 2.500h7v7h-7zM2.500.5h5q2 0 2 2v5" fill="none" stroke="#888" />
            </svg>
          </button>
          <button aria-label="Close"><CloseX className="size-[10px]" /></button>
        </div>
      </header>
      <nav className="flex h-6 shrink-0 items-center gap-[19px] bg-linear-to-r from-[#efefef] via-[#f5f5f5] to-[#fcfcfc] pl-[15px]">
        <button>File</button>
        <button>View</button>
        <button>Tools</button>
        <button>Help</button>
      </nav>
      <ToolBar />
      <div className="flex flex-1 border-t border-[#9c9c9c]">
        <SideStrips />
        <Viewport />
      </div>
      <Taskbar />
      <JogDialog />
    </div>
  );
}
